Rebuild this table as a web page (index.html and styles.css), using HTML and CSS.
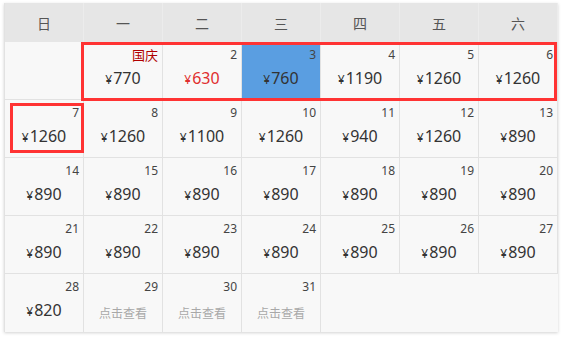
FILE: index.html
```html
<!DOCTYPE html>
<html lang="zh">
<head>
<meta charset="utf-8">
<link rel="stylesheet" href="styles.css">
</head>
<body>
<div class="page">
  <div class="cal">
    <div class="head">
      <div class="hd">日</div><div class="hd">一</div><div class="hd">二</div><div class="hd">三</div><div class="hd">四</div><div class="hd">五</div><div class="hd">六</div>
    </div>
    <div class="grid">
      <div class="cell"></div>
      <div class="cell"><div class="date fest">国庆</div><div class="price"><span class="yen">¥</span>770</div></div>
      <div class="cell"><div class="date">2</div><div class="price red"><span class="yen">¥</span>630</div></div>
      <div class="cell sel"><div class="date">3</div><div class="price"><span class="yen">¥</span>760</div></div>
      <div class="cell"><div class="date">4</div><div class="price"><span class="yen">¥</span>1190</div></div>
      <div class="cell"><div class="date">5</div><div class="price"><span class="yen">¥</span>1260</div></div>
      <div class="cell"><div class="date">6</div><div class="price"><span class="yen">¥</span>1260</div></div>

      <div class="cell"><div class="date">7</div><div class="price"><span class="yen">¥</span>1260</div></div>
      <div class="cell"><div class="date">8</div><div class="price"><span class="yen">¥</span>1260</div></div>
      <div class="cell"><div class="date">9</div><div class="price"><span class="yen">¥</span>1100</div></div>
      <div class="cell"><div class="date">10</div><div class="price"><span class="yen">¥</span>1260</div></div>
      <div class="cell"><div class="date">11</div><div class="price"><span class="yen">¥</span>940</div></div>
      <div class="cell"><div class="date">12</div><div class="price"><span class="yen">¥</span>1260</div></div>
      <div class="cell"><div class="date">13</div><div class="price"><span class="yen">¥</span>890</div></div>

      <div class="cell"><div class="date">14</div><div class="price"><span class="yen">¥</span>890</div></div>
      <div class="cell"><div class="date">15</div><div class="price"><span class="yen">¥</span>890</div></div>
      <div class="cell"><div class="date">16</div><div class="price"><span class="yen">¥</span>890</div></div>
      <div class="cell"><div class="date">17</div><div class="price"><span class="yen">¥</span>890</div></div>
      <div class="cell"><div class="date">18</div><div class="price"><span class="yen">¥</span>890</div></div>
      <div class="cell"><div class="date">19</div><div class="price"><span class="yen">¥</span>890</div></div>
      <div class="cell"><div class="date">20</div><div class="price"><span class="yen">¥</span>890</div></div>

      <div class="cell"><div class="date">21</div><div class="price"><span class="yen">¥</span>890</div></div>
      <div class="cell"><div class="date">22</div><div class="price"><span class="yen">¥</span>890</div></div>
      <div class="cell"><div class="date">23</div><div class="price"><span class="yen">¥</span>890</div></div>
      <div class="cell"><div class="date">24</div><div class="price"><span class="yen">¥</span>890</div></div>
      <div class="cell"><div class="date">25</div><div class="price"><span class="yen">¥</span>890</div></div>
      <div class="cell"><div class="date">26</div><div class="price"><span class="yen">¥</span>890</div></div>
      <div class="cell"><div class="date">27</div><div class="price"><span class="yen">¥</span>890</div></div>

      <div class="cell last"><div class="date">28</div><div class="price"><span class="yen">¥</span>820</div></div>
      <div class="cell last"><div class="date">29</div><div class="more">点击查看</div></div>
      <div class="cell last"><div class="date">30</div><div class="more">点击查看</div></div>
      <div class="cell last"><div class="date">31</div><div class="more">点击查看</div></div>
      <div class="cell last none"></div>
      <div class="cell last none"></div>
      <div class="cell last none"></div>
    </div>
  </div>
  <div class="mark mark-week"></div>
  <div class="mark mark-day"></div>
</div>
</body>
</html>
```
FILE: styles.css
```css
* { box-sizing: border-box; }
html, body { margin: 0; padding: 0; background: #ffffff; }
body {
  font-family: "Noto Sans", "Noto Sans CJK SC", sans-serif;
  color: #333;
}
.page {
  position: relative;
  width: 562px;
  height: 337px;
  padding: 3px 0 0 4px;
}
.cal {
  width: 554px;
  background: #f8f8f8;
  border-left: 1px solid #e2e2e2;
  box-shadow: 0 1px 3px rgba(0, 0, 0, 0.18);
}
.head {
  display: grid;
  grid-template-columns: repeat(7, 79px);
  height: 39px;
  background: #e6e6e6;
}
.hd {
  display: flex;
  align-items: center;
  justify-content: center;
  font-family: "Noto Sans CJK SC", sans-serif;
  font-size: 14px;
  color: #555;
  border-right: 1px solid #ececec;
}
.grid {
  display: grid;
  grid-template-columns: repeat(7, 79px);
  grid-auto-rows: 58px;
}
.cell {
  border-right: 1px solid #e2e2e2;
  border-bottom: 1px solid #e2e2e2;
  padding: 5px 4px 0 4px;
  display: flex;
  flex-direction: column;
}
.cell.last { border-bottom: none; }
.cell.none { border-right: none; }
.cell.sel { background: #5a9ee1; }
.date {
  text-align: right;
  font-size: 12px;
  line-height: 16px;
  height: 16px;
  color: #444;
}
.date.fest {
  font-family: "Noto Sans CJK SC", sans-serif;
  font-size: 13px;
  color: #b00000;
}
.price {
  margin-top: 4px;
  text-align: center;
  font-size: 16px;
  line-height: 22px;
  color: #333;
}
.price.red { color: #e02e2e; }
.yen {
  font-size: 12px;
  margin-right: 1px;
}
.more {
  margin-top: 10px;
  text-align: center;
  font-family: "Noto Sans CJK SC", sans-serif;
  font-size: 12px;
  line-height: 16px;
  color: #a8a8a8;
}
.mark {
  position: absolute;
  border: 3px solid #ff3333;
}
.mark-week {
  left: 81px;
  top: 42px;
  width: 476px;
  height: 59px;
}
.mark-day {
  left: 10px;
  top: 103px;
  width: 74px;
  height: 50px;
}
```
